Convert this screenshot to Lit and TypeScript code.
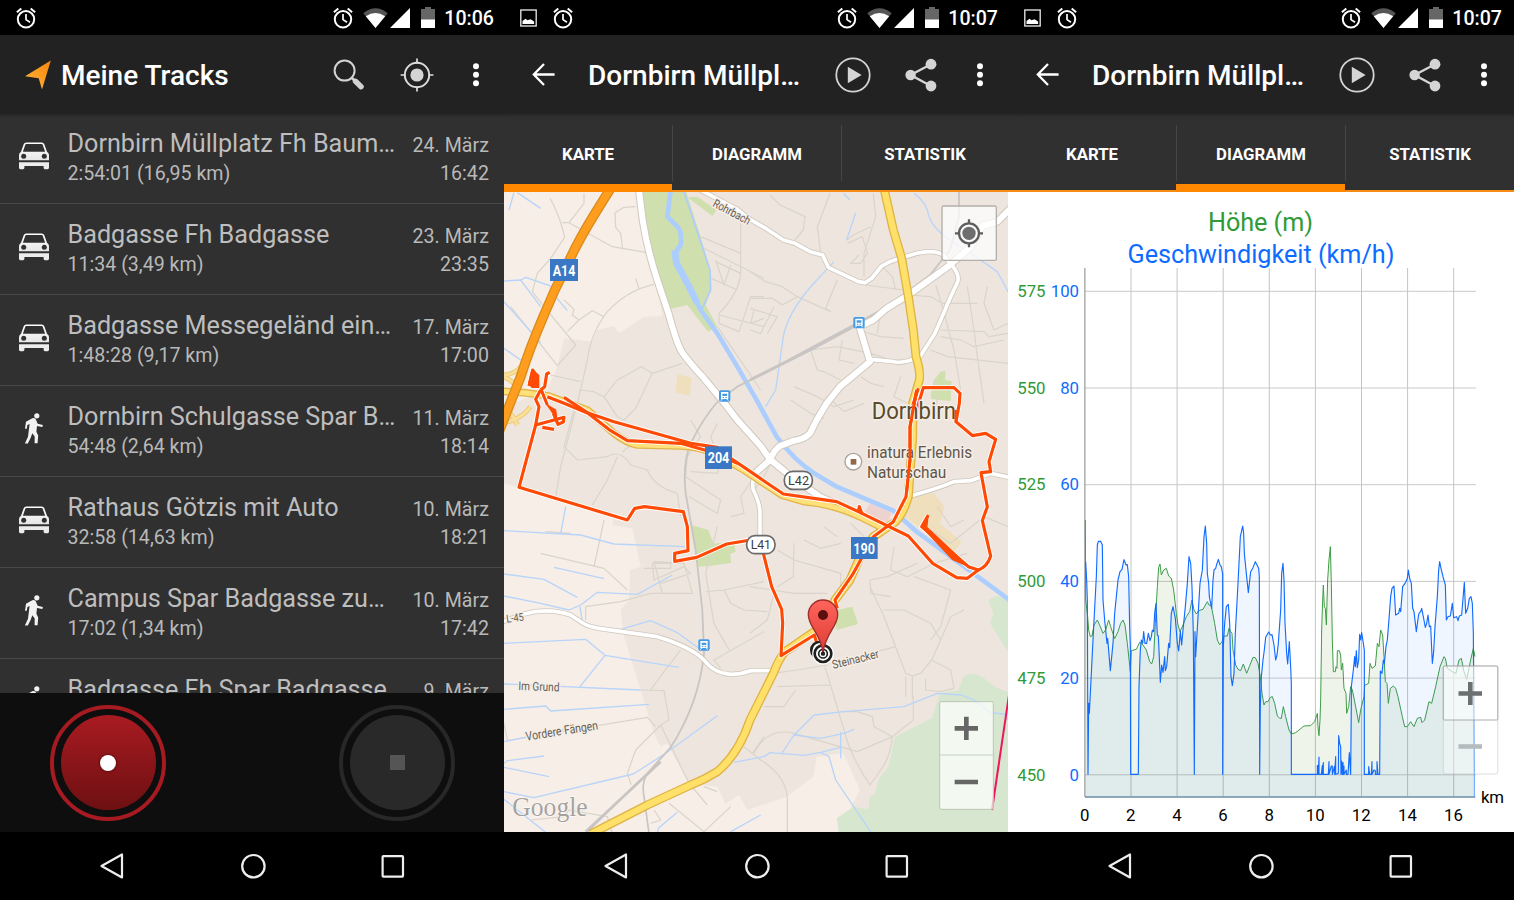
import { LitElement, html, svg, css } from "lit";
import { customElement, property } from "lit/decorators.js";

const alarmIcon = html`<svg width="20" height="22" viewBox="0 0 20 22" fill="none" stroke="#fff">
  <circle cx="10" cy="12.3" r="8.2" stroke-width="2"></circle>
  <path d="M10 7v5.6l4 2.6" stroke-width="1.7"></path>
  <path d="M.9 5.2 5.3 1.6M19.1 5.2 14.7 1.6" stroke-width="2"></path></svg>`;

const pictureIcon = html`<svg width="17" height="18" viewBox="0 0 17 18">
  <rect x=".8" y="1" width="15.4" height="16" fill="none" stroke="#ddd" stroke-width="1.4"></rect>
  <path d="M2.5 15v-3l3-2.2 2 1.4 3-1 3.6 2.3V15z" fill="#fff"></path></svg>`;

const wifiIcon = html`<svg width="25" height="20" viewBox="0 0 25 20">
  <path d="M.3 5.2Q12.500-4.600 24.700 5.200L12.500 20z" fill="#555"></path>
  <path d="M2.800 8.300Q12.500 1.600 22.200 8.300L12.500 20z" fill="#fff"></path></svg>`;

const signalIcon = html`<svg width="20" height="20" viewBox="0 0 20 20"><path d="M20 0v20H0z" fill="#fff"></path></svg>`;

const batteryIcon = html`<svg width="14" height="21" viewBox="0 0 14 21">
  <path d="M4 0h6v2h4v11H0V2h4z" fill="#666"></path><path d="M0 12.5h14V21H0z" fill="#fff"></path></svg>`;

const searchIcon = html`<svg width="32" height="32" viewBox="0 0 32 32" fill="none" stroke="#d2d2d2">
  <circle cx="11.6" cy="11.6" r="10" stroke-width="2"></circle>
  <path d="m18.5 18.5 4 4" stroke-width="2.6"></path>
  <path d="m22.5 22.3 5.6 5.4" stroke-width="5.4" stroke-linecap="round"></path></svg>`;

const targetIcon = html`<svg width="34" height="34" viewBox="0 0 34 34" fill="none" stroke="#dedede">
  <circle cx="17" cy="17" r="12.2" stroke-width="1.9"></circle>
  <circle cx="17" cy="17" r="6.6" fill="#d4d4d4" stroke="none"></circle>
  <path d="M17 .6v5M17 28.4v5M.6 17h5M28.4 17h5" stroke-width="1.7"></path></svg>`;

const dotsIcon = html`<svg width="8" height="26" viewBox="0 0 8 26" fill="#fff">
  <circle cx="4" cy="4.3" r="3"></circle><circle cx="4" cy="12.8" r="3"></circle><circle cx="4" cy="21.3" r="3"></circle></svg>`;

const playIcon = html`<svg width="36" height="36" viewBox="0 0 36 36">
  <circle cx="18" cy="18" r="16.7" fill="none" stroke="#d4d4d4" stroke-width="1.8"></circle>
  <path d="M12.8 9.8 26.6 18 12.8 26.2z" fill="#d4d4d4"></path></svg>`;

const shareIcon = html`<svg width="32" height="34" viewBox="0 0 32 34">
  <path d="M26 6.2 5.6 17 26 28" fill="none" stroke="#d4d4d4" stroke-width="2.4"></path>
  <g fill="#d4d4d4"><circle cx="26" cy="6.2" r="5.4"></circle><circle cx="5.6" cy="17" r="5.2"></circle><circle cx="26" cy="28" r="5.4"></circle></g></svg>`;

const backIcon = html`<svg width="23" height="23" viewBox="0 0 23 23" fill="none" stroke="#fff" stroke-width="2.3">
  <path d="M22.6 11.5H2M12 1 1.8 11.5 12 22"></path></svg>`;

const logoIcon = html`<svg width="26" height="30" viewBox="0 0 26 30">
  <defs><linearGradient id="lg" x1="1" y1="0" x2="0" y2="1"><stop offset="0" stop-color="#f9850c"></stop><stop offset="1" stop-color="#fdb93c"></stop></linearGradient></defs>
  <path d="M25.8.4 17 29.4 13.7 18.2 0 16.2z" fill="url(#lg)"></path></svg>`;

const carIcon = html`<svg width="32" height="28" viewBox="0 0 32 28">
  <defs><linearGradient id="cg" x1="0" y1="0" x2="0" y2="1"><stop offset="0" stop-color="#fff"></stop><stop offset="1" stop-color="#e6e6e6"></stop></linearGradient></defs>
  <path fill="url(#cg)" fill-rule="evenodd" d="M8.4.5h15.2Q25.600.5 26.300 2.300L29 9.800Q31 11 31 13V18.300H1V13Q1 11 3 9.800L5.700 2.300Q6.400.5 8.400.5zM8.300 2.100Q7.500 2.100 7.200 3L4.900 9.700H27.100L24.800 3Q24.500 2.100 23.700 2.100z"></path>
  <circle cx="5.700" cy="14.300" r="2.500" fill="#303030"></circle><circle cx="26.300" cy="14.300" r="2.500" fill="#303030"></circle>
  <path fill="#ececec" d="M1 20.200h30v5.600q0 1.400-1.400 1.400h-2.600q-1.400 0-1.400-1.400V24H6.400v1.800q0 1.400-1.400 1.400H2.400Q1 27.200 1 25.800z"></path></svg>`;

const walkIcon = html`<svg width="20" height="31" viewBox="0 0 20 31" fill="#f2f2f2">
  <circle cx="12.800" cy="2.800" r="2.600"></circle>
  <path d="M2 8.700 8.300 5.300Q10 4.700 11.500 5.700L13.700 10.800 18.800 12Q18.900 13.500 18.200 14L13 13 12.400 18.800 14.200 22.400 13.600 30.300H10.600L10.700 23.600 8.300 20.300 6.600 25 3.800 30.500H.900L4 23.700 5.600 11 3.400 12 2.800 15.700H1z"></path></svg>`;

@customElement("status-bar")
class StatusBar extends LitElement {
  @property() time = "";
  @property({ type: Boolean }) picture = false;
  static styles = css`
    :host { display: flex; height: 35px; background: #000; box-sizing: border-box; padding: 0 10px 0 15.500px; align-items: center; }
    svg { display: block; flex: none; }
    .left { display: flex; gap: 16px; align-items: center; flex: 1; }
    .right { display: flex; align-items: center; }
    .alarm { margin-right: 9.500px; }
    .wifi { margin-right: 2.500px; }
    .sig { margin-right: 11px; }
    .time { font: 500 19.600px/35px Roboto, sans-serif; color: #fff; width: 59px; text-align: right; white-space: nowrap; padding-top: 2px; }
  `;
  render() {
    return html`<div class="left">${this.picture ? pictureIcon : ""}${alarmIcon}</div>
      <div class="right"><span class="alarm">${alarmIcon}</span><span class="wifi">${wifiIcon}</span><span class="sig">${signalIcon}</span>${batteryIcon}<span class="time">${this.time}</span></div>`;
  }
}

@customElement("nav-bar")
class NavBar extends LitElement {
  static styles = css`
    :host { display: flex; height: 68px; background: #000; box-sizing: border-box; padding-left: 42px; }
    span { width: 140.500px; display: flex; align-items: center; justify-content: center; }
    svg { display: block; }
  `;
  render() {
    return html`
      <span><svg width="26" height="28" viewBox="0 0 26 28"><path d="M23 2.500V25.500L2.500 14z" fill="none" stroke="#eee" stroke-width="2.200" stroke-linejoin="round"></path></svg></span>
      <span><svg width="26" height="26" viewBox="0 0 26 26"><circle cx="13.400" cy="13.200" r="11.200" fill="none" stroke="#eee" stroke-width="2.200"></circle></svg></span>
      <span><svg width="24" height="24" viewBox="0 0 24 24"><rect x="1.600" y="2.200" width="20.400" height="20.400" rx=".8" fill="none" stroke="#eee" stroke-width="2.200"></rect></svg></span>`;
  }
}

@customElement("app-bar")
class AppBar extends LitElement {
  @property() heading = "";
  @property({ type: Boolean }) home = false;
  static styles = css`
    :host { display: flex; height: 79px; background: #222; align-items: center; box-sizing: border-box; padding-left: 25px; width: 504px; }
    svg { display: block; }
    .lead { width: 36px; }
    .lead.back { width: 56px; padding-left: 3px; }
    h1 { margin: 0; flex: 1; font: 500 28px/32px Roboto, sans-serif; color: #fff; white-space: nowrap; padding-top: 2px; }
    .act { width: 68px; display: flex; justify-content: center; }
    .act.more { width: 50px; margin-right: 3.500px; }
  `;
  render() {
    return html`<span class="lead ${this.home ? "" : "back"}">${this.home ? logoIcon : backIcon}</span>
      <h1>${this.heading}</h1>
      <span class="act">${this.home ? searchIcon : playIcon}</span>
      <span class="act">${this.home ? targetIcon : shareIcon}</span>
      <span class="act more">${dotsIcon}</span>`;
  }
}

@customElement("tab-strip")
class TabStrip extends LitElement {
  @property({ type: Number }) active = 0;
  static styles = css`
    :host { display: grid; grid-template-columns: 168px 169px 1fr; height: 78px; background: linear-gradient(#272727, #303030 4px); box-sizing: border-box; }
    .tab { display: grid; grid-template-rows: 11px 56px 1fr; font: 700 16.800px/58px Roboto, sans-serif; color: #fff; text-align: center; border-bottom: 2px solid #f68c14; }
    .tab span { grid-row: 2; border-left: 1px solid #454545; }
    .tab:first-child span { border: 0; }
    .tab.on { border-bottom: 8px solid #ff8800; }
  `;
  render() {
    return html`${["KARTE", "DIAGRAMM", "STATISTIK"].map((t, i) => html`<div class="tab ${i === this.active ? "on" : ""}"><span>${t}</span></div>`)}`;
  }
}

const tracks = [
  ["car", "Dornbirn Müllplatz Fh Baum…", "2:54:01 (16,95 km)", "24. März", "16:42"],
  ["car", "Badgasse Fh Badgasse", "11:34 (3,49 km)", "23. März", "23:35"],
  ["car", "Badgasse Messegeländ ein…", "1:48:28 (9,17 km)", "17. März", "17:00"],
  ["walk", "Dornbirn Schulgasse Spar B…", "54:48 (2,64 km)", "11. März", "18:14"],
  ["car", "Rathaus Götzis mit Auto", "32:58 (14,63 km)", "10. März", "18:21"],
  ["walk", "Campus Spar Badgasse zu…", "17:02 (1,34 km)", "10. März", "17:42"],
  ["walk", "Badgasse Fh Spar Badgasse", "", "9. März", ""],
];

@customElement("track-list")
class TrackList extends LitElement {
  static styles = css`
    :host { display: block; height: 579px; overflow: hidden; background: linear-gradient(#262626, #303030 4px); }
    .row { display: flex; height: 91px; box-sizing: border-box; border-bottom: 1px solid #484848; font: 400 19.600px/28px Roboto, sans-serif; color: #b9b9b9; padding-right: 15px; white-space: nowrap; }
    .row:first-child { margin-top: -1px; }
    .icon { width: 67.500px; box-sizing: border-box; padding: 0 0 4px; display: flex; align-items: center; justify-content: center; }
    .icon svg { display: block; }
    .walk { padding-bottom: 6px; }
    .main { flex: 1; padding-top: 17px; }
    .name { font-size: 25.200px; height: 30px; color: #bebebe; }
    .when { padding-top: 19px; text-align: right; letter-spacing: .05px; }
  `;
  render() {
    return tracks.map(([kind, name, detail, date, time]) => html`<div class="row">
      <div class="icon ${kind}">${kind === "car" ? carIcon : walkIcon}</div>
      <div class="main"><div class="name">${name}</div><div>${detail}</div></div>
      <div class="when"><div>${date}</div><div>${time}</div></div></div>`);
  }
}

@customElement("record-bar")
class RecordBar extends LitElement {
  static styles = css`
    :host { display: flex; height: 139px; background: #0e0e0e; box-sizing: border-box; padding: 11.500px 49px 0 50px; justify-content: space-between; }
    .ring { width: 116px; height: 116px; box-sizing: border-box; border-radius: 50%; border: 4.500px solid #a61b21; display: grid; place-items: center; }
    .disc { width: 95px; height: 95px; border-radius: 50%; background: linear-gradient(#a81b21, #6d1012); display: grid; place-items: center; }
    .dot { width: 16px; height: 16px; border-radius: 50%; background: #fff; box-shadow: 0 0 3px #400; }
    .stop { border-color: #282828; }
    .stop .disc { background: #292929; }
    .sq { width: 15px; height: 15px; background: #555; }
  `;
  render() {
    return html`<div class="ring"><div class="disc"><div class="dot"></div></div></div>
      <div class="ring stop"><div class="disc"><div class="sq"></div></div></div>`;
  }
}

const roads = {
  a14: "M320 -5L272 72Q215 165 190 225Q150 300 120 375Q75 480 50 560L-15 725",
  west: "M405 0L416 90Q430 180 460 270L495 375Q512 440 530 480Q545 505 600 565L660 638L700 690L770 768L798 808L868 865L948 920L990 940",
  rohr: "M580 -5L700 58L738 88L780 112L838 150L873 160L918 185L956 195L973 232L1063 275L1083 278L1103 265L1133 228Q1160 212 1188 205L1238 190Q1290 178 1318 195L1343 225Q1368 255 1361 275L1338 325L1293 430L1248 500Q1200 522 1170 515L1100 508",
  main: "M1530 45L1480 95L1435 108L1400 170L1338 225L1213 315L1148 355L1108 390L1066 410L1098 515L1008 590L968 640L938 690L918 730Q900 748 870 752L828 768Q810 780 798 810L753 850",
  l41: "M753 850Q742 880 748 900Q768 940 768 970V1050",
  east: "M1210 920Q1290 900 1350 875L1400 872L1460 850L1530 865",
  l45: "M-5 1295L60 1272Q130 1252 200 1275L235 1298Q250 1310 290 1316L460 1340Q560 1370 600 1410Q630 1450 680 1453Q710 1453 740 1442H808",
  yns: "M1140 -5L1168 120L1193 205L1213 320L1228 420L1236 500Q1250 545 1246 570L1226 640V740L1213 920Q1195 980 1168 1000L1138 1020L1108 1040L1068 1100L1038 1170L993 1230L973 1275L938 1320L843 1385Q825 1405 808 1450L738 1590Q705 1690 640 1745Q600 1770 560 1785L430 1845L260 1932",
  y204: "M-5 604L60 608L135 618L250 660Q290 695 330 730Q370 760 400 765L530 768Q590 770 640 795L720 840L780 880L833 915L900 935Q980 940 1068 980L1138 1015",
};

const minor = [
  "M138 25Q150 45 155 60Q170 90 182 142L140 205L100 250L85 305L120 350L215 465L160 527L20 350",
  "M175 98H195L240 40V10M195 98L325 170L425 187M395 50L360 52L333 68L335 112L350 130L356 178M395 265L405 297M450 283Q370 300 310 365Q260 430 250 510Q235 580 220 640L170 830L155 920",
  "M180 330L210 358L205 375L225 390L190 425M225 390L265 362L300 380M535 520L445 550L412 530L340 570L300 620L340 680L360 690L395 655L445 550M225 600L270 605L300 620M140 555L230 575",
  "M710 100V250Q705 310 645 370V400L705 425L740 320L780 320M590 140L710 190M600 175L780 265M635 215L710 250M635 210L660 285L680 225M622 265L700 300M645 375L780 410M640 410L770 600M750 360L740 400L780 385",
  "M798 15L828 45L903 80L898 120L873 150M978 10L940 110L950 190M1108 10L1115 80L1080 190V260M1028 150L1048 135L1100 110M1030 160L1075 140L1090 190L1070 220H1040L1065 195M738 245L785 275L835 290L880 320L980 365L965 355L1000 270M738 325L805 325L835 345L880 320M738 420L770 430L810 350M738 355L820 380L790 430",
  "M1083 285L1200 300M1130 225L1165 260L1175 300M1215 315L1280 320L1315 340H1420M1295 285L1315 350L1350 480L1370 600M1390 290L1410 420L1420 500L1440 640M1450 290L1440 340L1470 420L1512 400M1310 420L1440 425L1455 440L1512 430M1310 440L1370 450L1410 470L1500 450M1280 480L1330 500L1512 520M1060 420L1130 440L1200 445M1128 380L1120 430M1015 450L1005 510L1050 520",
  "M920 480L1000 470L1100 490L1145 505M920 480L940 540L960 545L1010 570M870 590L940 620L990 650L1050 630M970 620L1020 665L1080 640M1070 560L1100 580L1140 590M1190 560L1170 620L1210 640M1290 570L1300 650M860 630L920 670L960 685",
  "M210 660L180 770L220 810L310 800Q340 780 370 810L380 825L430 840Q450 890 520 910L530 980M340 800L310 870L265 945M560 690L590 740L550 800L545 860L650 930L640 970L555 920M640 700L620 740L640 790M820 780L780 860L750 900M650 820L640 850L560 845M680 980L720 970L710 920L745 870M355 785L400 750M110 1090L300 1135L370 1200M300 990L270 1130M125 1025L200 1030M245 1290V1250L350 1235L440 1210L565 1210L540 1120L450 1115L475 1210M420 1135H500V1120L445 1120L450 1170L540 1130L560 1150L470 1180",
  "M640 1010L605 1150L630 1300L675 1380M605 1205L660 1200L780 1175M660 1200L680 1240L720 1260L790 1265M780 1325L630 1410L650 1435M440 1500L480 1445L530 1380M410 1500L480 1502L495 1590L470 1605L395 1680L370 1750L382 1785M20 1650L430 1582L455 1610M470 1605L555 1780L610 1845M600 1790L640 1805M680 1850L600 1925M0 1600L10 1650L20 1650",
  "M820 1080L870 1110L1010 1150L1010 1190M870 1060L868 1160L820 1190M738 1190L870 1210H970M738 1330L790 1290L810 1210M1098 1170L1150 1160L1240 1120M1098 1170L1100 1210L1160 1220M1170 1070L1160 1140L1210 1160L1290 1120L1390 1090M1230 1160L1340 1200L1310 1310L1280 1350M960 1010L1000 1040M1040 1000L1080 1040M900 1050L950 1075L1010 1060M1300 950L1340 1010L1380 990M1280 1020L1340 1060L1440 980L1512 1010",
  "M1098 1190L1138 1275L1205 1450L1225 1458L1250 1450L1283 1410L1340 1440L1350 1495L1310 1505L1265 1500V1465M1225 1458V1525M1205 1460V1520M1138 1275L1175 1370L1062 1400M1138 1260H1200L1280 1300L1310 1350L1283 1410M1310 1350L1340 1280L1380 1260M963 1430L1020 1620Q1040 1700 1098 1785L1130 1740Q1160 1700 1165 1640L1228 1590V1520M820 1490L980 1485M808 1450L880 1440L970 1425M780 1550L840 1550L875 1500M750 1690Q790 1610 870 1630L1060 1685L1165 1640L1110 1610L1105 1580L1060 1565H1010M720 1670L770 1710Q850 1760 850 1830V1930M745 1690L780 1640M80 1890L180 1880L195 1860L310 1880L325 1930M495 1840L600 1925M450 1860L470 1890L440 1900",
];

const streams = [
  "M15 60L30 8M40 8L110 55M0 273L50 270L65 262L140 288M50 270L110 350M155 320L190 362M0 335L110 458M0 475L50 510",
  "M1018 10L1038 30M1055 68L1028 150M990 215L925 285Q850 370 838 440L815 600L785 650M1230 10Q1268 35 1275 80Q1290 120 1345 155L1400 190L1480 245L1512 305",
  "M0 1022L230 1035L330 1062L545 1070M185 950L170 1030M150 1132L300 1166M0 1152L120 1168L220 1222M0 1218L110 1240L195 1260L230 1245L280 1207L400 1213L505 1155M228 1250L235 1295",
  "M0 1360L245 1348L303 1396L525 1432M303 1396L228 1490M0 1482L410 1500M0 1558L125 1548L140 1563L435 1543M0 1655L100 1635L190 1615M0 1720L10 1712L120 1698M0 1732L135 1760M0 1805L90 1823L388 1752L485 1690L640 1577M0 1828L125 1927M350 1318L440 1292L520 1328L585 1375M460 1930L463 1915L520 1867M680 1925L770 1875M690 1717L780 1700L798 1688L900 1696L950 1687L975 1700L995 1770L1100 1925M835 1688L870 1635L930 1575L1020 1565L1200 1550L1300 1510L1370 1515L1410 1530L1460 1568L1500 1572L1512 1590M870 1635L950 1645L1020 1630L1050 1618M1010 1625V1705M950 1687L1010 1672",
];

const trackPaths = [
  "M110 600L95 628L105 650L95 705L45 892L370 990L392 955L422 950L538 965L550 1010L552 1082L512 1090V1114L578 1102L668 1062L740 1050",
  "M778 1090L803 1190L833 1258L836 1300L831 1397L931 1335L938 1358",
  "M130 620L180 640L245 667L330 695L560 760L640 772L680 805L725 835L780 873L838 912L998 935L1063 965L1213 1038L1286 1120L1358 1163L1390 1165L1423 1140",
  "M180 622L250 668L320 722L370 752L530 760L620 785L700 820",
  "M1222 660L1243 595M1238 660L1258 593H1350L1368 610L1366 640L1356 695L1406 737L1445 730L1475 748L1455 815L1460 845L1431 848L1450 950L1435 992L1460 1098Q1450 1130 1423 1140L1393 1130L1253 1010L1273 975",
  "M1238 600L1218 710V810L1206 920L1168 995L1108 1040L1048 1150L993 1230L1000 1255",
  "M1063 965L1066 950L1074 972M95 705L150 690L180 682L178 696L162 703L148 670M115 712L150 718M112 600L130 645M75 588L86 540L100 560M110 600L122 590L128 552L137 547",
];

const station = (x: number, y: number) => svg`<g transform="translate(${x} ${y})">
  <rect x="-17" y="-17" width="34" height="34" rx="5" fill="#459be3"></rect>
  <path fill="#fff" fill-rule="evenodd" d="M-11-12H11V9H-11zM-7-7V0H7V-7zM-6 3V6H-2V3zM2 3V6H6V3z"></path><path d="M-7 9-11 14M7 9 11 14" stroke="#fff" stroke-width="3"></path></g>`;

@customElement("map-view")
class MapView extends LitElement {
  static styles = css`
    :host { display: block; height: 640px; }
    svg { display: block; }
    text { font-family: Roboto, sans-serif; }
    .halo { paint-order: stroke; stroke: #f5eee7; stroke-width: 9px; stroke-linejoin: round; fill: #655d54; }
    .city { fill: #594b2b; }
    .poi { fill: #5f5549; }
    .shield { fill: #fff; font-weight: 700; font-size: 42px; }
    .google { font-family: "Liberation Serif", serif; font-size: 82px; fill: #a5a19d; stroke: #fff; stroke-width: 3px; paint-order: stroke; }
  `;
  render() {
    const line = (d: string, c: string, w: number) => svg`<path d=${d} stroke=${c} stroke-width=${w}></path>`;
    const white = [roads.west, roads.main];
    const thin = [roads.rohr, roads.l45, roads.east, roads.l41];
    return html`<svg width="504" height="640" viewBox="0 6 1512 1920">
      <rect width="1512" height="1930" fill="#f6eee7"></rect>
      <path fill="#eee6de" d="M405 0H1512V1930H1000L1068 1800L1018 1690L938 1700L928 1760L848 1820L730 1860L705 1815L665 1842L640 1790L555 1780L490 1660L470 1670L450 1630L410 1500L360 1340L350 1260L375 1230L378 1140L410 1130L385 1015L325 1005L330 975L45 892L0 880V650L130 600L160 530L180 445L265 455L280 420L330 408L345 430L420 380L475 378Z"></path>
      <g fill="#cfdfae">
        <path d="M408 0H545L590 140L618 240L620 300L605 345L640 410L612 425L550 345L495 358L465 270L430 150Z"></path>
        <path d="M550 22 580 20 638 60 625 78ZM562 1005 613 1020 628 1060 690 1060 695 1085 678 1092 682 1118 618 1128 582 1130 570 1060ZM1310 545 1325 542 1323 570 1343 573 1340 633 1280 627 1282 600 1290 570ZM988 1262 1045 1250 1062 1302 998 1320Z"></path>
      </g>
      <path fill="#efdfbc" d="M520 553 563 563 557 617 515 608ZM1218 920 1290 910 1322 950 1308 1000 1373 1055 1350 1085 1278 1035 1195 975Z"></path>
      <path fill="#eed2cf" d="M1098 940 1163 968 1150 1000 1080 970Z"></path>
      <path fill="#d7e6cf" d="M998 1885 1048 1850 1093 1858 1098 1820 1113 1810 1123 1770 1153 1730 1173 1640 1283 1585 1308 1510 1363 1500 1378 1460Q1400 1440 1440 1465Q1480 1500 1512 1505V1930H1005ZM1512 1225 1475 1218 1453 1230 1468 1270 1458 1300 1512 1385Z"></path>
      <g fill="none" stroke-linejoin="round">
        ${minor.map((d) => line(d, "#dad4ca", 3.600))}
        ${streams.map((d) => line(d, "#b8d4fa", 4))}
        ${line("M540 5L585 140L618 240L620 300L595 355", "#acceff", 5)}
        ${line("M500 0L490 80L520 110Q535 125 530 165Q505 195 515 220L550 280L590 360L640 430L700 530L755 625L818 740Q870 810 928 848L998 890L1168 962L1238 1025L1530 1240", "#acceff", 14)}
        ${line("M512 180L518 220L555 290L580 340", "#acceff", 20)}
        ${line("M1365 0V80L1338 180L1278 255L1158 345L1058 400L918 475L780 550L700 590L645 630Q600 680 560 760Q535 820 545 910L575 1080L595 1260L600 1390Q585 1540 500 1672L430 1750L240 1935", "#c9c5c3", 5.500)}
        ${line("M738 570L918 480L1058 405", "#c9c5c3", 9)}
        ${line("M430 1750Q412 1780 420 1820L435 1930", "#c9c5c3", 5)}
        ${line("M245 1925L470 1715", "#c9c5c3", 8)}
        ${line("M-5 555Q30 555 50 530M-5 700Q50 690 80 650M5 655Q25 670 40 705M-5 560Q30 570 40 600", "#ecc76c", 14)}
        ${line("M-5 555Q30 555 50 530M-5 700Q50 690 80 650M5 655Q25 670 40 705M-5 560Q30 570 40 600", "#f9e09a", 9)}
        ${white.map((d) => line(d, "#cfc8bd", 24))}${thin.map((d) => line(d, "#cfc8bd", 16))}
        ${white.map((d) => line(d, "#fff", 18))}${thin.map((d) => line(d, "#fff", 11))}
        ${line(roads.y204, "#e1b54c", 23)}${line(roads.yns, "#dfb345", 27)}
        ${line(roads.y204, "#ffe07a", 15)}${line(roads.yns, "#ffe068", 19)}
        ${line(roads.a14, "#d98b1c", 30)}${line(roads.a14, "#ff9e1e", 22)}
        ${trackPaths.map((d) => line(d, "#fff", 15))}
        ${trackPaths.map((d) => line(d, "#ff4a05", 9.500))}
        <path d="M1253 1010 1345 1108 1395 1130 1268 1012 1272 980ZM74 580 84 540 104 556 104 592 84 592ZM130 645 155 660 158 685Z" fill="#ff4a05" stroke="#ff4a05" stroke-width="4"></path>
        ${line("M1464 1860L1515 1515", "#f0145a", 6)}
      </g>
      ${station(662, 618)}${station(1065, 398)}${station(600, 1365)}
      <g fill="#3a77c4"><rect x="138" y="207" width="84" height="66"></rect><rect x="603" y="769" width="81" height="68"></rect><rect x="1041" y="1041" width="80" height="66"></rect></g>
      <text class="shield" x="146" y="258" textLength="68" lengthAdjust="spacingAndGlyphs">A14</text>
      <text class="shield" x="611" y="820" textLength="65" lengthAdjust="spacingAndGlyphs">204</text>
      <text class="shield" x="1048" y="1091" textLength="65" lengthAdjust="spacingAndGlyphs">190</text>
      <g fill="#fff" stroke="#6a6a6a" stroke-width="5"><rect x="841" y="844" width="84" height="54" rx="25"></rect><rect x="728" y="1037" width="85" height="54" rx="25"></rect></g>
      <g font-size="40" fill="#3b3b3b"><text x="852" y="885" textLength="63" lengthAdjust="spacingAndGlyphs">L42</text><text x="740" y="1078" textLength="61" lengthAdjust="spacingAndGlyphs">L41</text></g>
      <text class="halo" font-size="35" transform="translate(624 48) rotate(28)" textLength="122" lengthAdjust="spacingAndGlyphs">Rohrbach</text>
      <text class="halo" font-size="33" transform="translate(8 1298) rotate(-7)" textLength="53" lengthAdjust="spacingAndGlyphs">L-45</text>
      <text class="halo" font-size="36" transform="translate(43 1500) rotate(2)" textLength="123" lengthAdjust="spacingAndGlyphs">Im Grund</text>
      <text class="halo" font-size="37" transform="translate(67 1652) rotate(-9)" textLength="219" lengthAdjust="spacingAndGlyphs">Vordere Fängen</text>
      <text class="halo" font-size="36" transform="translate(988 1437) rotate(-14)" textLength="143" lengthAdjust="spacingAndGlyphs">Steinacker</text>
      <text class="halo city" font-size="70" x="1103" y="686" textLength="253" lengthAdjust="spacingAndGlyphs">Dornbirn</text>
      <g class="halo poi" font-size="48"><text x="1089" y="805" textLength="315" lengthAdjust="spacingAndGlyphs">inatura Erlebnis</text><text x="1089" y="865" textLength="238" lengthAdjust="spacingAndGlyphs">Naturschau</text></g>
      <path d="M1238 600L1218 710V810L1208 905" fill="none" stroke="#ff4a05" stroke-width="8.500"></path>
      <path d="M1356 660V695" fill="none" stroke="#ff4a05" stroke-width="9"></path>
      <circle cx="1048" cy="815" r="25" fill="#fff" stroke="#aaa096" stroke-width="4"></circle><rect x="1040" y="807" width="17" height="17" fill="#94684a"></rect>
      <text class="google" x="25" y="1878" textLength="226" lengthAdjust="spacingAndGlyphs">Google</text>
      <g fill="#fff" stroke="#1f1f1f"><circle cx="946" cy="1380" r="24" stroke-width="8"></circle><circle cx="957" cy="1391" r="30" stroke="#fff" stroke-width="5"></circle><circle cx="957" cy="1391" r="25" stroke-width="8"></circle><circle cx="957" cy="1391" r="13" stroke-width="5"></circle></g>
      <defs><linearGradient id="pin" x1="0" y1="0" x2="0" y2="1"><stop offset="0" stop-color="#ff655c"></stop><stop offset="1" stop-color="#dd3c35"></stop></linearGradient></defs>
      <path d="M957 1388C950 1330 913 1310 913 1274A44 44 0 0 1 1001 1274C1001 1310 964 1330 957 1388Z" fill="url(#pin)" stroke="#9d2f2b" stroke-width="4"></path>
      <circle cx="957" cy="1275" r="15" fill="#5b100d"></circle>
      <circle cx="957" cy="1391" r="6.500" fill="#222"></circle>
      <rect x="1314" y="48" width="163" height="163" rx="5" fill="#fff" fill-opacity=".72" stroke="#b3afaa" stroke-width="4"></rect>
      <g transform="translate(1395 130)" stroke="#5e5e5e" fill="none"><circle r="30" stroke-width="7"></circle><circle r="20" fill="#6e6e6e" stroke="none"></circle><path d="M0-42V-29M0 42V29M-42 0H-29M42 0H29" stroke-width="7"></path></g>
      <rect x="1307" y="1535" width="161" height="323" rx="5" fill="#fff" fill-opacity=".7" stroke="#bcc5b7" stroke-width="3"></rect>
      <path d="M1308 1695H1467" stroke="#d5dcd1" stroke-width="4"></path>
      <path d="M1352 1615H1422M1387 1580V1650M1352 1776H1422" stroke="#666" stroke-width="14"></path>
    </svg>`;
  }
}

const speed = "M233 185L236 240L238 300L240 823L242 610L244 640L250 520L256 400L265 230L268 135L271 124H278L283 135L285 300L290 360L297 430L299 415L307 512L315 430L320 340L330 240L336 215L342 208L348 179L354 195L358 194L362 230L365 380L367 440L368 823H391L393 560L397 450L400 420L404 430L407 395L411 430L416 430L421 400L426 422L430 410L433 390L437 395L440 340L444 310L448 405L451 408L453 450L457 547L461 495L465 517L470 470L472 512L476 500L482 430L485 443L490 340L495 320L502 355L508 430L512 453L517 395L521 435L525 390L532 320L538 250L543 170L548 190L552 260L556 400L559 823L561 395L563 470L570 350L576 250L583 210L588 110L592 78L596 130L598 220L602 250L604 290L611 325L615 240L618 210L623 205L626 193L631 178L636 195L640 200L644 222V823L646 440L650 370L655 320L661 313L665 370L669 530L673 557L678 520L682 400L690 250L697 110L704 78L707 100L709 160L715 220L721 278L728 215L735 203L742 185L747 195L752 205L754 230L755 823L757 620L760 530L765 480L769 450L773 412L782 396L787 405L792 404L798 435L803 480L807 465L811 430L818 330L821 220L825 190L828 240L831 370L836 460L839 492L844 425L848 500L850 550V823H928V797H931V823L933 771V823H940L943 797V823L946 788V823H961L963 785V823L970 798H973V823L980 798V823L983 770V823L991 820L992 707L995 730L998 740L999 823L1001 783L1003 823L1005 787V823L1008 798V823L1015 810V823H1020L1024 758L1028 823L1030 610V560L1036 510L1040 470L1042 500L1045 452L1048 503L1052 480L1055 403L1058 420L1061 398L1065 423L1069 450V823H1082V800L1085 823H1090L1092 785V823L1098 810L1102 812V823H1107V785L1110 823H1115L1117 513L1122 520L1126 480L1129 490L1134 440L1138 420L1142 370L1148 290L1152 265L1158 258L1163 345L1172 340L1175 325L1178 335L1184 260L1193 247L1198 235L1201 210L1205 235L1210 250L1214 325L1218 335L1225 395L1231 350L1233 340L1238 335L1241 325L1246 350L1252 382L1256 370L1260 345L1264 380L1268 378L1273 490L1277 455L1281 380L1288 290L1292 210L1295 185L1299 205L1305 230L1312 255L1315 360L1320 350L1327 348L1333 310L1337 353L1346 350L1350 362L1354 348L1361 345L1369 247L1373 340L1379 325L1384 295L1389 290L1393 310L1396 400L1399 823";
const height = "M232 60L233 300L239 350L242 390L247 410L252 408L258 375L268 360L276 378L285 400L293 390L302 360L308 380L320 416L330 395L338 370L345 360L351 375L358 430L367 515L370 452L385 448L395 427L405 435L415 450L425 485L431 492L437 470L442 370L448 260L452 202L456 192L460 225L467 210L475 205L482 228L490 235L497 270L505 340L510 375L516 395L525 375L535 350L545 335L552 300L558 330L565 342L572 332L585 328L598 305L603 315L610 318L620 370L628 420L635 434L642 425L648 408L658 408L663 385L668 395L672 400L675 450L683 495L690 508L698 512L706 492L716 520L724 500L735 472L742 473L750 490L757 530L762 580L768 615L773 605L780 605L787 592L793 590L800 610L808 648L815 655L820 655L826 620L833 650L843 690L850 702L863 698L888 678L908 677L920 665L928 640L930 680L933 707L936 660L938 600L941 390L944 300L946 255L949 320L952 325L955 375L959 240L963 180L967 140L970 250L973 420L976 515H982L984 500L987 505L988 452H994L998 465L1000 510L1004 490L1008 565L1014 580L1016 640L1022 620L1028 560L1033 570L1043 620L1052 668L1058 630L1068 590L1070 556L1082 550L1086 490L1092 505L1102 498L1108 430L1113 440L1118 390L1124 405L1128 470L1132 545L1137 550L1141 610L1147 565L1156 558L1163 565L1170 590L1183 650L1190 680L1198 680L1208 665L1218 680L1228 655L1238 652L1242 668L1250 660L1263 605L1271 610L1283 560L1296 500L1308 470L1312 475L1318 505L1333 515L1344 520L1353 480L1360 475L1368 515L1376 538L1388 480L1396 445L1401 470";

@customElement("chart-view")
class ChartView extends LitElement {
  static styles = css`
    :host { display: block; height: 640px; background: #fff; }
    svg { display: block; }
    text { font-family: Roboto, sans-serif; font-size: 16.800px; }
    .title { font-size: 25.200px; }
    .h { fill: #2f9a36; }
    .v { fill: #0d6cff; }
  `;
  render() {
    return html`<svg width="506" height="640" viewBox="1008 192 506 640">
      <text class="title h" x="1208" y="230.500" textLength="105">Höhe (m)</text>
      <text class="title v" x="1127.500" y="263" textLength="267">Geschwindigkeit (km/h)</text>
      ${[575, 550, 525, 500, 475, 450].map((v, i) => svg`<text class="h" x="1045.500" y=${297 + i * 96.700} text-anchor="end">${v}</text>
        <text class="v" x="1079" y=${297 + i * 96.700} text-anchor="end">${100 - i * 20}</text>
        <path d="M1085 ${291.300 + i * 96.700}H1476" stroke="#c9c9c9"></path>`)}
      ${[0, 1, 2, 3, 4, 5, 6, 7, 8].map((i) => svg`<text x=${1084.700 + i * 46.100} y="821.300" text-anchor="middle">${i * 2}</text>
        <path d="M${1084.900 + i * 46.100} 268V797" stroke=${i ? "#c4c4c4" : "#858585"}></path>`)}
      <text x="1481" y="803" textLength="23">km</text>
      <g transform="translate(1008 500) scale(.33333)" stroke-linejoin="round">
        <path d="${height}V891H232Z" fill="#418115" fill-opacity=".09"></path>
        <path d=${height} fill="none" stroke="#3f9d45" stroke-width="3"></path>
        <path d="${speed}V891H233Z" fill="#1670ff" fill-opacity=".062"></path>
        <path d=${speed} fill="none" stroke="#116bff" stroke-width="3.400"></path>
        <path d="M231 891H1402" stroke="#6d8eaa" stroke-width="4"></path>
        <path d="M1399 820V891" stroke="#5f9fff" stroke-width="3"></path>
      </g>
      <rect x="1443.300" y="666" width="54.500" height="108" rx="2" fill="#fff" fill-opacity=".4" stroke="#bbb" stroke-opacity=".5"></rect>
      <rect x="1443.300" y="666" width="54.500" height="54" rx="1" fill="#fff" fill-opacity=".4" stroke="#999" stroke-opacity=".8"></rect>
      <path d="M1458.500 693.500H1482M1470.300 682V705" stroke="#6c6f70" stroke-width="4.600"></path>
      <path d="M1458.500 746.500H1482" stroke="#b5bcbd" stroke-width="4.600"></path>
    </svg>`;
  }
}

@customElement("app-root")
class AppRoot extends LitElement {
  static styles = css`
    :host { display: flex; width: 1514px; height: 900px; overflow: hidden; background: #000; }
    .phone { width: 504px; display: flex; flex-direction: column; }
    .last { width: 506px; background: linear-gradient(90deg, transparent 504px, #222 504px) 0 35px / 506px 79px no-repeat; }
    .last .status { width: 504px; }
  `;
  render() {
    return html`
      <section class="phone"><status-bar time="10:06"></status-bar><app-bar home heading="Meine Tracks"></app-bar><track-list></track-list><record-bar></record-bar><nav-bar></nav-bar></section>
      <section class="phone"><status-bar picture time="10:07"></status-bar><app-bar heading="Dornbirn Müllpl…"></app-bar><tab-strip .active=${0}></tab-strip><map-view></map-view><nav-bar></nav-bar></section>
      <section class="phone last"><status-bar class="status" picture time="10:07"></status-bar><app-bar heading="Dornbirn Müllpl…"></app-bar><tab-strip .active=${1}></tab-strip><chart-view></chart-view><nav-bar></nav-bar></section>`;
  }
}
